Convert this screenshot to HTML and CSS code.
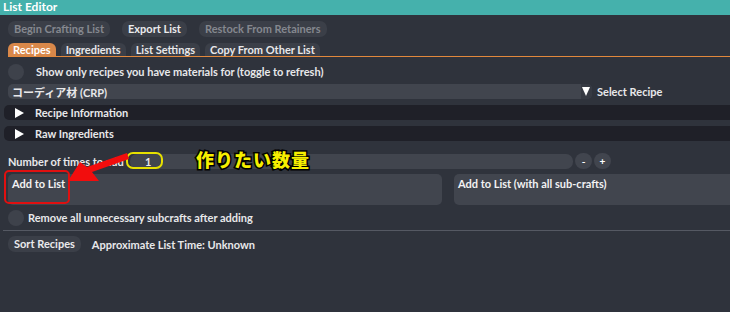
FILE: index.html
```html
<!DOCTYPE html>
<html lang="en">

<head>
  <meta charset="UTF-8">
  <title>List Editor</title>
  <link rel="stylesheet" href="styles.css">
</head>

<body>
  <div class="le-window">
    <div class="le-titlebar">List Editor</div>

    <div class="le-body">
      <!-- Toolbar -->
      <div class="le-toolbar">
        <button class="le-btn le-btn-disabled">Begin Crafting List</button>
        <button class="le-btn">Export List</button>
        <button class="le-btn le-btn-disabled">Restock From Retainers</button>
      </div>

      <!-- Tabs -->
      <div class="le-tabs">
        <span class="le-tab le-tab-active">Recipes</span>
        <span class="le-tab">Ingredients</span>
        <span class="le-tab">List Settings</span>
        <span class="le-tab">Copy From Other List</span>
      </div>

      <label class="le-check">
        <span class="le-check-box"></span>
        <span>Show only recipes you have materials for (toggle to refresh)</span>
      </label>

      <div class="le-combo-row">
        <div class="le-combo">
          <span>コーディア材 (CRP)</span>
          <span class="le-combo-arrow"></span>
        </div>
        <span class="le-combo-label">Select Recipe</span>
      </div>

      <div class="le-header"><span class="le-header-arrow"></span>Recipe Information</div>
      <div class="le-header"><span class="le-header-arrow"></span>Raw Ingredients</div>

      <div class="le-input-row">
        <span class="le-input-label">Number of times to add</span>
        <div class="le-input">1</div>
        <button class="le-step">-</button>
        <button class="le-step">+</button>
      </div>

      <div class="le-add-row">
        <button class="le-add">Add to List</button>
        <button class="le-add le-add-wide">Add to List (with all sub-crafts)</button>
      </div>

      <label class="le-check le-check-tight">
        <span class="le-check-box"></span>
        <span>Remove all unnecessary subcrafts after adding</span>
      </label>

      <div class="le-separator"></div>

      <div class="le-footer">
        <button class="le-btn">Sort Recipes</button>
        <span>Approximate List Time: Unknown</span>
      </div>
    </div>

    <!-- Annotations drawn over the screenshot -->
    <div class="le-note-yellow"></div>
    <div class="le-note-red"></div>
    <div class="le-note-text">作りたい数量</div>
    <svg class="le-note-arrow" width="75" height="35" viewBox="0 0 75 35">
      <polygon points="8,31 20,12 27,17 67,3 69,9 32,22 39,31" fill="#f20d0d" />
    </svg>
  </div>
</body>

</html>
```

FILE: styles.css
```css
body {
  margin: 0;
  padding: 0;
  background-color: #2f333c;
}

/* Fenster */
.le-window {
  position: relative;
  width: 730px;
  height: 312px;
  overflow: hidden;
  background-color: #2f333c;
  color: #e8e8ea;
  font-family: 'Lato', 'Noto Sans CJK JP', sans-serif;
  font-size: 11px;
  font-weight: 700;
}

.le-titlebar {
  height: 15px;
  line-height: 14px;
  padding-left: 3px;
  background-color: #45b1ac;
  color: #fff;
  font-size: 12px;
}

.le-body {
  display: flex;
  flex-direction: column;
  padding: 6px 0 0 8px;
}

button {
  font: inherit;
  letter-spacing: inherit;
  border: none;
  cursor: pointer;
}

/* Knöpfe */
.le-btn {
  height: 16px;
  padding: 0 6px;
  line-height: 16px;
  background-color: #3b3f48;
  color: #ebebed;
  border-radius: 7px;
}

.le-btn-disabled {
  color: #85888f;
}

.le-toolbar {
  display: flex;
  gap: 12px;
}

/* Reiter */
.le-tabs {
  display: flex;
  gap: 5px;
  margin-top: 6px;
  border-bottom: 1px solid #e2883c;
}

.le-tab {
  height: 13px;
  padding: 0 5px;
  line-height: 14px;
  background-color: #3b3f48;
  border-radius: 6px 6px 0 0;
}

.le-tab-active {
  background-color: #d9884a;
  color: #fff;
}

/* Checkbox */
.le-check {
  display: flex;
  align-items: center;
  gap: 12px;
  height: 17px;
  margin-top: 6px;
  white-space: nowrap;
}

.le-check-tight {
  gap: 4px;
  margin-top: 4px;
}

.le-check-box {
  width: 16px;
  height: 16px;
  border-radius: 50%;
  background-color: #3e424b;
}

/* Auswahl */
.le-combo-row {
  display: flex;
  align-items: center;
  margin-top: 4px;
}

.le-combo {
  display: flex;
  align-items: center;
  justify-content: space-between;
  width: 584px;
  height: 15px;
  padding-left: 4px;
  box-sizing: border-box;
  background-color: #41454e;
  border-radius: 5px;
}

.le-combo-arrow {
  width: 11px;
  height: 15px;
  background-color: #363a43;
  border-radius: 0 5px 5px 0;
  position: relative;
}

.le-combo-arrow::after {
  content: '';
  position: absolute;
  left: 1px;
  top: 3px;
  border-left: 4.5px solid transparent;
  border-right: 4.5px solid transparent;
  border-top: 9px solid #fff;
}

.le-combo-label {
  margin-left: 5px;
}

/* Aufklappbare Kopfzeilen */
.le-header {
  display: flex;
  align-items: center;
  height: 15px;
  margin: 6px 0 0 -4px;
  padding-left: 11px;
  background-color: #1f2028;
  border-radius: 5px 0 0 5px;
}

.le-header-arrow {
  width: 0;
  height: 0;
  margin-right: 11px;
  border-top: 5px solid transparent;
  border-bottom: 5px solid transparent;
  border-left: 9px solid #fff;
}

/* Anzahl */
.le-input-row {
  display: flex;
  align-items: center;
  margin-top: 12px;
  white-space: nowrap;
}

.le-input-label {
  width: 122px;
}

.le-input {
  width: 443px;
  height: 15px;
  line-height: 15px;
  padding-left: 15px;
  box-sizing: border-box;
  background-color: #41454e;
  border-radius: 7px;
}

.le-step {
  width: 17px;
  height: 16px;
  margin-left: 2px;
  padding: 0;
  background-color: #41454e;
  color: #fff;
  border-radius: 8px;
  font-size: 10px;
}

/* Hinzufügen */
.le-add-row {
  display: flex;
  gap: 12px;
  margin-top: 5px;
}

.le-add {
  flex-shrink: 0;
  width: 434px;
  height: 31px;
  padding: 3px 0 0 4px;
  display: flex;
  align-items: flex-start;
  text-align: left;
  background-color: #41454e;
  color: #f2f2f3;
  border-radius: 5px;
}

.le-add-wide {
  flex: 1;
  width: auto;
  border-radius: 5px 0 0 5px;
}

.le-separator {
  height: 1px;
  margin: 4px 0 0 -5px;
  background-color: #555963;
}

.le-footer {
  display: flex;
  align-items: center;
  gap: 11px;
  margin-top: 5px;
}

/* Markierungen */
.le-note-yellow {
  position: absolute;
  left: 126px;
  top: 152px;
  width: 33px;
  height: 13px;
  border: 2px solid #e6e000;
  border-radius: 7px;
}

.le-note-red {
  position: absolute;
  left: 4px;
  top: 170px;
  width: 62px;
  height: 30px;
  border: 2px solid #e01010;
  border-radius: 5px;
}

.le-note-text {
  position: absolute;
  left: 196px;
  top: 146px;
  color: #f6ef00;
  font-family: 'Noto Sans CJK JP', sans-serif;
  font-size: 18px;
  font-weight: 900;
  letter-spacing: 1px;
  -webkit-text-stroke: 3px #000;
  paint-order: stroke fill;
}

.le-note-arrow {
  position: absolute;
  left: 60px;
  top: 150px;
}
```
